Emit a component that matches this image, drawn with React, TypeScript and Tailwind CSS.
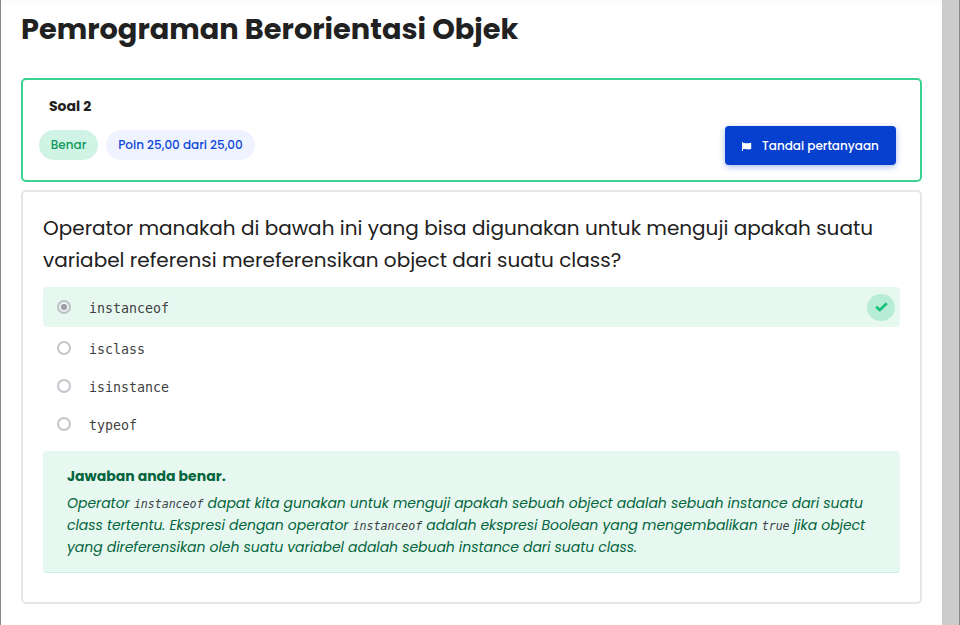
function Radio({ checked = false }: { checked?: boolean }) {
  return (
    <span className={`flex size-[14px] shrink-0 items-center justify-center rounded-full border-2 ${checked ? "border-[#b9c3c6] bg-[#eef1f4]" : "border-[#c5c5cb] bg-white"}`}>
      {checked && <span className="size-[6px] rounded-full bg-[#9a9fa8]" />}
    </span>
  );
}

function Code({ children }: { children: string }) {
  return <code className="font-['DejaVu_Sans_Mono',monospace] text-[11.64px] leading-none text-[#3c4148]">{children}</code>;
}

const OPTIONS = ["isclass", "isinstance", "typeof"];

export default function App() {
  return (
    <div className="flex h-[625px] w-[960px] overflow-hidden border-x border-[#888] bg-white font-['Poppins','Inter',sans-serif] text-[#212121]">
      <main className="flex w-[941px] shrink-0 flex-col bg-linear-to-b from-[#fbfbfb] to-white to-[8px] px-5">
        <h1 className="h-[78px] shrink-0 whitespace-nowrap pt-[10px] text-[28.8px] font-bold leading-[38px]">Pemrograman Berorientasi Objek</h1>

        <section className="flex h-[104px] shrink-0 items-start justify-between rounded-[5px] border-2 border-[#3bd193] bg-white pl-4 pr-6">
          <div>
            <h2 className="pl-[10px] pt-4 text-sm font-bold leading-5">Soal 2</h2>
            <div className="mt-[14px] flex gap-2 whitespace-nowrap text-xs font-medium">
              <span className="flex h-[30px] w-[59px] items-center justify-center rounded-full bg-[#cff3e4] text-[#129a5f]">Benar</span>
              <span className="flex h-[30px] w-[149px] items-center justify-center rounded-full bg-[#eff3ff] text-[#0d47d9]">Poin 25,00 dari 25,00</span>
            </div>
          </div>
          <button className="mt-[46px] flex h-[39px] w-[171px] items-center rounded-[4px] bg-[#0640cf] pl-[17px] text-xs font-medium text-white shadow-[0_2px_6px_rgba(6,64,207,0.35)]">
            <svg viewBox="0 0 10 10" className="mt-[2px] size-[10px]" fill="currentColor">
              <path d="M0 0h1v1.200C3 .4 5 2 9.200.8v6.200C6 8.200 3.600 6.200 1 7.200V9H0z" />
            </svg>
            <span className="ml-[10px] whitespace-nowrap">Tandai pertanyaan</span>
          </button>
        </section>

        <section className="mt-2 h-[414px] shrink-0 rounded-[5px] border-2 border-[#e6e6e6] px-5 pt-5">
          <p className="whitespace-nowrap text-xl leading-8">
            Operator manakah di bawah ini yang bisa digunakan untuk menguji apakah suatu
            <br />
            variabel referensi mereferensikan object dari suatu class?
          </p>
          <div className="mt-[11px] flex h-10 items-center rounded-[4px] bg-[#e7f8f0] pl-[14px] pr-[5px] font-['DejaVu_Sans_Mono',monospace] text-[13.29px] text-[#3f3f3f]">
            <Radio checked />
            <span className="ml-[18px] mt-[3px] flex-1">instanceof</span>
            <span className="flex h-[27px] w-7 items-center justify-center rounded-full bg-[#b7edd6]">
              <svg viewBox="0 0 13 10" className="h-[10px] w-[13px]" fill="none" stroke="#13c277" strokeWidth="2.6">
                <path d="M1.200 4.700 4.800 8 11.800 1.200" />
              </svg>
            </span>
          </div>
          <div className="mt-[2px] font-['DejaVu_Sans_Mono',monospace] text-[13.29px] text-[#3f3f3f]">
            {OPTIONS.map((o) => (
              <div key={o} className="flex h-[38px] items-center pl-[14px]">
                <Radio />
                <span className="ml-[18px] mt-[3px]">{o}</span>
              </div>
            ))}
          </div>
          <div className="mt-2 h-[122px] whitespace-nowrap rounded-[4px] border-b border-[#c9f0df] bg-[#e7f8f0] pl-6 pt-[14px] text-sm leading-[22px] text-[#03653d]">
            <p className="font-bold">Jawaban anda benar.</p>
            <p className="mt-[5px] italic tracking-[-0.045px]">
              Operator <Code>instanceof</Code> dapat kita gunakan untuk menguji apakah sebuah object adalah sebuah instance dari suatu
              <br />
              class tertentu. Ekspresi dengan operator <Code>instanceof</Code> adalah ekspresi Boolean yang mengembalikan <Code>true</Code> jika object
              <br />
              yang direferensikan oleh suatu variabel adalah sebuah instance dari suatu class.
            </p>
          </div>
        </section>
      </main>
      <div className="flex-1 bg-[#ccc]" />
    </div>
  );
}
